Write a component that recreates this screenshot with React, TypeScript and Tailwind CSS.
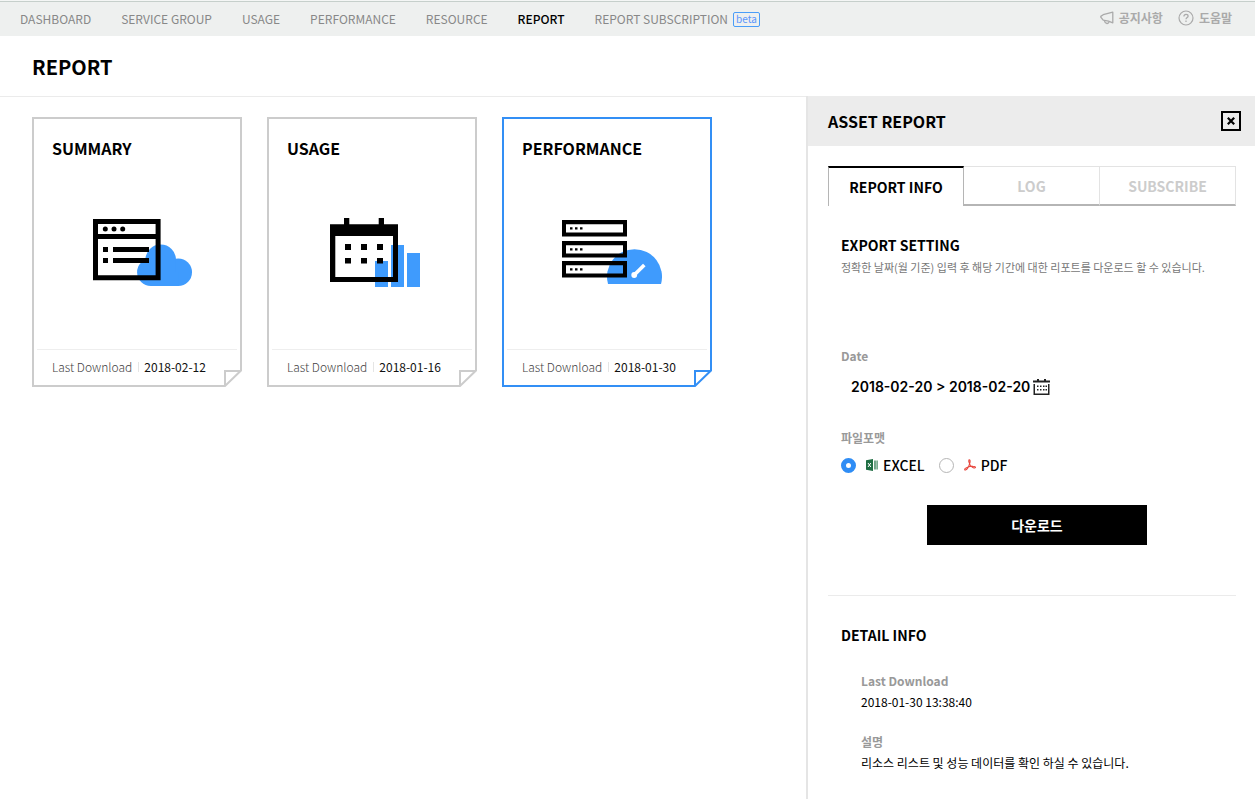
import { useState } from "react";
import type { ReactNode } from "react";

const navItems = [
  "DASHBOARD",
  "SERVICE GROUP",
  "USAGE",
  "PERFORMANCE",
  "RESOURCE",
  "REPORT",
  "REPORT SUBSCRIPTION",
];

function MegaphoneIcon() {
  return (
    <svg width="14" height="14" viewBox="0 0 14 14" fill="none" stroke="#aaaaaa" strokeWidth="1.3" strokeLinejoin="round">
      <path d="M12.800 1.200v10.600L8.500 10.200 3.200 9.200.8 6.200V5.400L3.200 3.700z" />
      <path d="M4.400 9.600c.3 1.800 1.300 2.700 2.600 2.900 1.100.1 1.800-.6 2.200-1.900" />
    </svg>
  );
}

function HelpIcon() {
  return (
    <svg width="16" height="16" viewBox="0 0 16 16" fill="none" stroke="#aaaaaa" strokeWidth="1.2">
      <circle cx="8" cy="8" r="7" />
      <path d="M5.900 6.500c0-1.300.9-2.100 2.100-2.100s2.100.7 2.100 1.800C10.100 7.500 8 7.600 8 9.300" />
      <path d="M8 10.500v1.400" />
    </svg>
  );
}

function SummaryArt() {
  return (
    <svg width="110" height="80" viewBox="0 0 110 80" aria-hidden="true">
      <g fill="#3f9bfd">
        <circle cx="78.700" cy="46.900" r="15.300" />
        <circle cx="68.900" cy="59.200" r="13.800" />
        <circle cx="96.200" cy="59.200" r="13.800" />
        <path d="M68.900 46h25v13h2.300v14H68.900z" />
      </g>
      <path fillRule="evenodd" d="M11 6h67.600v61.300H11zM16 11v10h57.600V11zM16 26v36.300h57.600V26z" />
      <circle cx="23.300" cy="16" r="2.500" />
      <circle cx="32" cy="16" r="2.500" />
      <circle cx="40.700" cy="16" r="2.500" />
      <path d="M21 34h5v5h-5zM31 34h36v5H31zM21 45h5v5h-5zM31 45h36v5H31z" />
    </svg>
  );
}

function UsageArt() {
  return (
    <svg width="110" height="80" viewBox="0 0 110 80" aria-hidden="true">
      <path fill="#3f9bfd" d="M58 48h13v26H58zM74 32h13v42H74zM90 40h13v34H90z" />
      <path fillRule="evenodd" d="M13 11.300h14V5h5.300v6.300h29.400V5H67v6.300h14V69H13zM18.300 23v41H76V23z" />
      <path d="M28 31h6v6h-6zM44 31h6v6h-6zM60 31h6v6h-6zM28 45h6v5.600h-6zM44 45h6v5.600h-6zM60 45h6v5.600h-6z" />
    </svg>
  );
}

function PerformanceArt() {
  return (
    <svg width="110" height="80" viewBox="0 0 110 80" aria-hidden="true">
      <path fill="#3f9bfd" d="M56 71a27.500 27.500 0 1 1 53 0z" />
      <circle cx="82.200" cy="62" r="2.900" fill="#fff" />
      <path d="M82.200 62 92.300 52" stroke="#fff" strokeWidth="3.600" />
      {[7, 28, 48].map((y) => (
        <g key={y}>
          <path
            transform={`translate(10 ${y})`}
            fillRule="evenodd"
            d="M0 0h65v16.600H0zM4 4.300v8.200h57V4.300z"
          />
          <path transform={`translate(18 ${y + 7.2})`} d="M0 0h2.500v2.400H0zM5 0h2.500v2.400H5zM10 0h2.500v2.400H10z" />
        </g>
      ))}
    </svg>
  );
}

type Report = { title: string; date: string; art: ReactNode; selected?: boolean };

const reports: Report[] = [
  { title: "SUMMARY", date: "2018-02-12", art: <SummaryArt /> },
  { title: "USAGE", date: "2018-01-16", art: <UsageArt /> },
  { title: "PERFORMANCE", date: "2018-01-30", art: <PerformanceArt />, selected: true },
];

function ReportCard({ title, date, art, selected }: Report) {
  const tone = selected ? "border-[#338ff5] text-[#338ff5]" : "border-[#cccccc] text-[#cccccc]";
  return (
    <article className={`relative flex h-[270px] w-[210px] flex-col border-2 bg-white ${tone}`}>
      <h2 className="px-[18px] pt-[17px] text-base leading-6 font-bold text-black">{title}</h2>
      <div className="flex flex-1 items-center justify-center pb-[3px] text-black">{art}</div>
      <div className="mx-[3px] flex h-[36px] items-center border-t border-[#eeeeee] px-[15px] pb-0.5 text-xs">
        <span className="font-light text-[#444444]">Last Download</span>
        <span className="mr-[5px] ml-1.5 h-[10px] w-px bg-[#e5e5e5]" />
        <span className="text-[#111111]">{date}</span>
      </div>
      <svg className="absolute -right-0.5 -bottom-0.5" width="18" height="17" viewBox="0 0 18 17" aria-hidden="true">
        <path fill="#fff" d="M0 0h18v17H0z" />
        <path fill="none" stroke="currentColor" strokeWidth="2" d="M1 16V1h15.500z" />
      </svg>
    </article>
  );
}

function ExcelIcon() {
  return (
    <svg width="12" height="12" viewBox="0 0 12 12" aria-hidden="true">
      <path fill="#1f6e43" d="M0 1.300 7 0v12L0 10.700z" />
      <path d="m2 4 2.800 4M4.800 4 2 8" stroke="#fff" strokeWidth="1" />
      <path d="M8.500 1.500v9M11.400 1.500v9" stroke="#6da385" strokeWidth="1" />
      <path d="M9.900 1.500v9" stroke="#1f6e43" strokeWidth="1" />
    </svg>
  );
}

function PdfIcon() {
  return (
    <svg width="12" height="12" viewBox="0 0 12 12" aria-hidden="true" fill="none" stroke="#e8453c" strokeWidth="1.100">
      <path d="M5.200.8c1.200-.2 1 2 .5 3.600C5 7 3.200 10.500 1.600 11c-1 .2-1.300-.8-.3-1.600C3 8.200 6.500 7.200 9 7.300c1.700 0 2.700.6 2.400 1.300-.5.900-2.300.4-3.500-.7C6.300 6.600 5.300 4.800 4.900 3c-.2-1.100-.1-2 .3-2.200z" />
    </svg>
  );
}

function CalendarIcon() {
  return (
    <svg width="17" height="16" viewBox="0 0 17 16" aria-hidden="true">
      <path d="M0 1.500h17v2H0zM4 0h2v2H4zM11 0h2v2h-2zM.5 5H2v9.500h13V5h1.500v11H.5z" fill="#222" />
      <path
        d="M4 6.500h1.500V8H4zM7 6.500h1.500V8H7zM10 6.500h1.500V8H10zM12.500 6.500H14V8h-1.500zM4 10h1.500v1.500H4zM7 10h1.500v1.500H7zM10 10h1.500v1.500H10zM12.500 10H14v1.500h-1.500z"
        fill="#222"
      />
    </svg>
  );
}

const radioStyle =
  "size-[15px] appearance-none rounded-full border border-[#b5b5b5] bg-white checked:border-[5px] checked:border-[#2f8df5]";

export default function App() {
  const [format, setFormat] = useState("excel");
  const [period, setPeriod] = useState("2018-02-20 > 2018-02-20");

  return (
    <div className="flex min-h-screen flex-col bg-white font-['Noto_Sans_CJK_KR',sans-serif] text-xs text-black">
      <div className="h-px bg-[#f4f6f5]" />
      <nav className="flex h-[35px] items-center justify-between border-t border-[#c6cfcb] bg-[#eef0ef] pr-[23px] pl-5 leading-5">
        <ul className="flex items-center gap-[30px] whitespace-nowrap">
          {navItems.map((item) => (
            <li key={item} className="flex items-center gap-[5px]">
              <a href="#" className={item === "REPORT" ? "font-medium text-black" : "text-[#888888]"}>
                {item}
              </a>
              {item === "REPORT SUBSCRIPTION" && (
                <span className="flex h-[15px] items-center rounded-xs border border-[#4a9df8] px-0.5 text-[10px] text-[#5b95fb]">
                  beta
                </span>
              )}
            </li>
          ))}
        </ul>
        <div className="flex items-center gap-[15px] pb-0.5 whitespace-nowrap text-[#aaaaaa]">
          <a href="#" className="flex items-center gap-[5px] font-bold">
            <MegaphoneIcon />
            공지사항
          </a>
          <a href="#" className="flex items-center gap-[5px] font-bold">
            <HelpIcon />
            도움말
          </a>
        </div>
      </nav>

      <header className="flex h-[60px] items-center px-8 pt-0.5">
        <h1 className="text-xl leading-8 font-bold">REPORT</h1>
      </header>

      <div className="flex flex-1">
        <main className="flex flex-1 flex-wrap content-start gap-[25px] border-t border-[#ebebeb] px-8 py-5">
          {reports.map((r) => (
            <ReportCard key={r.title} {...r} />
          ))}
        </main>

        <aside className="w-[449px] shrink-0 border-l-2 border-[#e5e5e5] pb-6">
          <div className="flex h-[50px] items-center justify-between bg-[#ececec] pr-[14px] pl-5">
            <h2 className="text-base leading-6 font-bold">ASSET REPORT</h2>
            <button type="button" aria-label="Close" className="flex size-5 items-center justify-center border-2 border-black">
              <svg width="8" height="8" viewBox="0 0 8 8" aria-hidden="true">
                <path d="m.8.8 6.400 6.400M7.200.8.800 7.200" stroke="#000" strokeWidth="2.200" />
              </svg>
            </button>
          </div>

          <div className="pt-5 pr-[19px] pl-5">
            <div role="tablist" className="grid h-10 grid-cols-3 text-sm leading-5">
              <button
                type="button"
                role="tab"
                aria-selected="true"
                className="border-x border-t-2 border-x-[#b5b5b5] border-t-black font-bold"
              >
                REPORT INFO
              </button>
              <button
                type="button"
                role="tab"
                aria-selected="false"
                className="border-t border-r border-b-2 border-[#e3e3e3] border-b-[#b5b5b5] font-bold text-[#cccccc]"
              >
                LOG
              </button>
              <button
                type="button"
                role="tab"
                aria-selected="false"
                className="border-t border-r border-b-2 border-[#e3e3e3] border-b-[#b5b5b5] font-bold text-[#cccccc]"
              >
                SUBSCRIBE
              </button>
            </div>

            <form className="border-b border-[#ebebeb] pt-[29px] pr-[3px] pb-[50px] pl-[13px] leading-5" onSubmit={(e) => e.preventDefault()}>
              <h3 className="text-sm leading-5 font-bold">EXPORT SETTING</h3>
              <p className="mt-0.5 text-[11px] leading-5 text-[#777777]">
                정확한 날짜(월 기준) 입력 후 해당 기간에 대한 리포트를 다운로드 할 수 있습니다.
              </p>

              <label htmlFor="period" className="mt-[69px] block font-bold text-[#999999]">
                Date
              </label>
              <div className="mt-[11px] flex h-5 items-center pl-2.5">
                <input
                  id="period"
                  value={period}
                  onChange={(e) => setPeriod(e.target.value)}
                  className="w-[182px] font-['Inter',sans-serif] text-sm leading-5 font-semibold outline-none"
                />
                <CalendarIcon />
              </div>

              <fieldset className="mt-[31px]">
                <legend className="font-bold text-[#999999]">파일포맷</legend>
                <div className="mt-[7px] flex h-5 items-center gap-[14px] text-sm leading-5 font-medium">
                  <label className="flex items-center">
                    <input
                      type="radio"
                      name="format"
                      className={radioStyle}
                      checked={format === "excel"}
                      onChange={() => setFormat("excel")}
                    />
                    <span className="mr-[5px] ml-2.5">
                      <ExcelIcon />
                    </span>
                    EXCEL
                  </label>
                  <label className="flex items-center">
                    <input
                      type="radio"
                      name="format"
                      className={radioStyle}
                      checked={format === "pdf"}
                      onChange={() => setFormat("pdf")}
                    />
                    <span className="mr-[5px] ml-2.5">
                      <PdfIcon />
                    </span>
                    PDF
                  </label>
                </div>
              </fieldset>

              <button type="submit" className="mx-auto mt-[30px] block h-10 w-[220px] bg-black text-sm font-bold text-white">
                다운로드
              </button>
            </form>

            <section className="pt-[29px] pl-[13px]">
              <h3 className="text-sm leading-5 font-bold">DETAIL INFO</h3>
              <dl className="mt-[26px] pl-5 leading-5">
                <dt className="font-bold text-[#999999]">Last Download</dt>
                <dd className="mt-px">2018-01-30 13:38:40</dd>
                <dt className="mt-5 font-bold text-[#999999]">설명</dt>
                <dd className="mt-px">리소스 리스트 및 성능 데이터를 확인 하실 수 있습니다.</dd>
              </dl>
            </section>
          </div>
        </aside>
      </div>
    </div>
  );
}
